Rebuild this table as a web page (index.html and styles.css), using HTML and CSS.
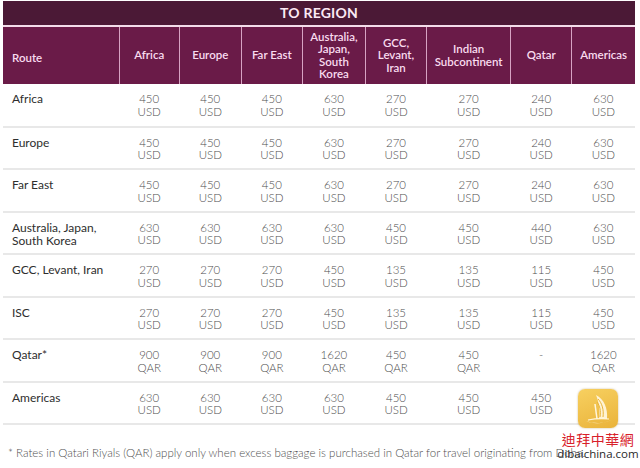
FILE: index.html
```html
<!DOCTYPE html>
<html lang="en">
<head>
<meta charset="utf-8">
<link rel="stylesheet" href="styles.css">
</head>
<body>
<div class="page">
  <table class="rates">
    <colgroup>
      <col class="c-route"><col class="c60"><col class="c62"><col class="c61"><col class="c63"><col class="c61"><col class="c84"><col class="c61"><col class="c63">
    </colgroup>
    <thead>
      <tr class="title-row"><th colspan="9">TO REGION</th></tr>
      <tr class="head-row">
        <th class="route-h">Route</th>
        <th>Africa</th>
        <th>Europe</th>
        <th>Far East</th>
        <th>Australia,<br>Japan,<br>South<br>Korea</th>
        <th>GCC,<br>Levant,<br>Iran</th>
        <th>Indian<br>Subcontinent</th>
        <th>Qatar</th>
        <th>Americas</th>
      </tr>
    </thead>
    <tbody>
      <tr><td class="route">Africa</td><td>450<br>USD</td><td>450<br>USD</td><td>450<br>USD</td><td>630<br>USD</td><td>270<br>USD</td><td>270<br>USD</td><td>240<br>USD</td><td>630<br>USD</td></tr>
      <tr><td class="route">Europe</td><td>450<br>USD</td><td>450<br>USD</td><td>450<br>USD</td><td>630<br>USD</td><td>270<br>USD</td><td>270<br>USD</td><td>240<br>USD</td><td>630<br>USD</td></tr>
      <tr><td class="route">Far East</td><td>450<br>USD</td><td>450<br>USD</td><td>450<br>USD</td><td>630<br>USD</td><td>270<br>USD</td><td>270<br>USD</td><td>240<br>USD</td><td>630<br>USD</td></tr>
      <tr><td class="route">Australia, Japan,<br>South Korea</td><td>630<br>USD</td><td>630<br>USD</td><td>630<br>USD</td><td>630<br>USD</td><td>450<br>USD</td><td>450<br>USD</td><td>440<br>USD</td><td>630<br>USD</td></tr>
      <tr><td class="route">GCC, Levant, Iran</td><td>270<br>USD</td><td>270<br>USD</td><td>270<br>USD</td><td>450<br>USD</td><td>135<br>USD</td><td>135<br>USD</td><td>115<br>USD</td><td>450<br>USD</td></tr>
      <tr><td class="route">ISC</td><td>270<br>USD</td><td>270<br>USD</td><td>270<br>USD</td><td>450<br>USD</td><td>135<br>USD</td><td>135<br>USD</td><td>115<br>USD</td><td>450<br>USD</td></tr>
      <tr><td class="route">Qatar*</td><td>900<br>QAR</td><td>900<br>QAR</td><td>900<br>QAR</td><td>1620<br>QAR</td><td>450<br>QAR</td><td>450<br>QAR</td><td>-</td><td>1620<br>QAR</td></tr>
      <tr><td class="route">Americas</td><td>630<br>USD</td><td>630<br>USD</td><td>630<br>USD</td><td>630<br>USD</td><td>450<br>USD</td><td>450<br>USD</td><td>450<br>USD</td><td></td></tr>
    </tbody>
  </table>
  <p class="note">* Rates in Qatari Riyals (QAR) apply only when excess baggage is purchased in Qatar for travel originating from Doha.</p>

  <div class="watermark">
    <div class="wm-logo">
      <svg width="40" height="38" viewBox="0 0 40 38">
        <path d="M18 5 C26 9 30 18 29 29 L21 29 C22 21 21 12 18 5 Z" fill="#fff6dc" opacity="0.95"/>
        <path d="M20 9 C24 13 26 20 25 27" stroke="#e8b43a" stroke-width="1" fill="none"/>
        <path d="M19 12 C22 16 23 21 22 27" stroke="#e8b43a" stroke-width="1" fill="none"/>
        <path d="M17 14 L19 29" stroke="#fff6dc" stroke-width="1.5"/>
        <path d="M8 31 C14 34 26 34 33 30 C30 32 24 33 20 33 C15 33 11 32 8 31 Z" fill="#fff6dc"/>
        <path d="M10 30 Q20 28 31 29" stroke="#fff6dc" stroke-width="1.2" fill="none"/>
      </svg>
    </div>
    <div class="wm-cn">迪拜中華網</div>
    <div class="wm-en">dibaichina.com</div>
  </div>
</div>
</body>
</html>
```

FILE: styles.css
```css
html, body {
  margin: 0;
  padding: 0;
  background: #ffffff;
}

.page {
  position: relative;
  width: 640px;
  height: 468px;
  padding: 1px 5px 0 3px;
  box-sizing: border-box;
  font-family: Lato, "Open Sans", "Liberation Sans", sans-serif;
}

.rates {
  width: 632px;
  table-layout: fixed;
  border-collapse: collapse;
}

.c-route { width: 116px; }
.c60 { width: 60px; }
.c61 { width: 61px; }
.c62 { width: 62px; }
.c63 { width: 63px; }
.c84 { width: 84px; }

.title-row th {
  height: 25px;
  padding: 0;
  background: #4b1936;
  color: #fbe9f4;
  font-size: 14px;
  line-height: 16px;
  font-weight: 700;
  letter-spacing: 0.2px;
  text-align: center;
  border-bottom: 2px solid #f3dcea;
  box-sizing: border-box;
}

.head-row th {
  height: 58px;
  padding: 0 2px;
  background: #6a1b48;
  color: #f9dcef;
  font-size: 11.5px;
  font-weight: 600;
  line-height: 12.5px;
  text-align: center;
  vertical-align: middle;
  border-left: 1px solid #d7a3c3;
  box-sizing: border-box;
}

.head-row th.route-h {
  text-align: left;
  padding: 5px 0 0 9px;
  border-left: none;
}

tbody td {
  height: 42.5px;
  padding: 9px 0 0;
  vertical-align: top;
  text-align: center;
  font-size: 11.5px;
  font-weight: 300;
  line-height: 12.5px;
  color: #4e4e4e;
  border-bottom: 2px solid #e8e8e8;
  box-sizing: border-box;
}

tbody td.route {
  text-align: left;
  padding: 8px 0 0 9px;
  color: #2e2e2e;
  font-weight: 400;
  font-size: 12px;
  line-height: 13.5px;
}

.note {
  margin: 21px 0 0 5px;
  font-size: 11.5px;
  font-weight: 300;
  color: #505050;
  white-space: nowrap;
}

.watermark {
  position: absolute;
  left: 560px;
  top: 389px;
  width: 76px;
  display: flex;
  flex-direction: column;
  align-items: center;
}

.wm-logo {
  width: 40px;
  height: 39px;
  border-radius: 7px;
  background: linear-gradient(160deg, #f7d060, #eab33a);
  box-shadow: 0 0 2px rgba(150, 110, 20, 0.5);
  display: flex;
  align-items: center;
  justify-content: center;
}

.wm-cn {
  margin-top: 3px;
  font-family: "Noto Sans CJK TC", "Noto Sans CJK SC", sans-serif;
  font-size: 14px;
  line-height: 16px;
  color: #d8202a;
  letter-spacing: 0.5px;
}

.wm-en {
  font-family: "Open Sans", "Liberation Sans", sans-serif;
  font-size: 11.5px;
  line-height: 14px;
  color: #2a2a2a;
}
```
